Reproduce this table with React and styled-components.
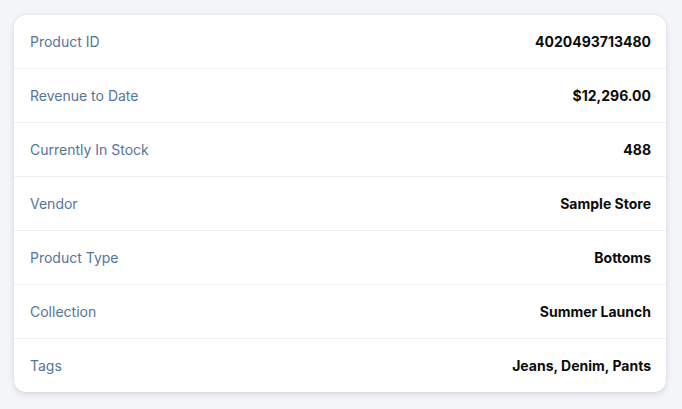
import React from 'react';
import styled, { createGlobalStyle } from 'styled-components';

const GlobalStyle = createGlobalStyle`
    body {
        margin: 0;
        background: #f4f5f9;
        font-family: Inter, "Liberation Sans", sans-serif;
        -webkit-font-smoothing: antialiased;
    }
`;

const Page = styled.div`
    padding: 15px 16px 16px 14px;
`;

const Card = styled.div`
    background: #ffffff;
    border-radius: 12px;
    box-shadow: 0 2px 6px rgba(30, 40, 70, 0.14), 0 0 1px rgba(30, 40, 70, 0.12);
    overflow: hidden;
`;

const Row = styled.div`
    display: flex;
    align-items: center;
    justify-content: space-between;
    height: 53px;
    padding: 0 15px 0 16px;

    &:not(:last-child) {
        border-bottom: 1px solid #eef0f5;
    }
`;

const Label = styled.span`
    font-size: 14px;
    color: #56749a;
`;

const Value = styled.span`
    font-size: 14px;
    font-weight: 700;
    color: #0c0c0d;
`;

const details = [
    ['Product ID', '4020493713480'],
    ['Revenue to Date', '$12,296.00'],
    ['Currently In Stock', '488'],
    ['Vendor', 'Sample Store'],
    ['Product Type', 'Bottoms'],
    ['Collection', 'Summer Launch'],
    ['Tags', 'Jeans, Denim, Pants'],
];

const App = () => {
    return (
        <Page>
            <GlobalStyle />
            <Card>
                {details.map(([label, value]) => (
                    <Row key={label}>
                        <Label>{label}</Label>
                        <Value>{value}</Value>
                    </Row>
                ))}
            </Card>
        </Page>
    );
};

export default App;
